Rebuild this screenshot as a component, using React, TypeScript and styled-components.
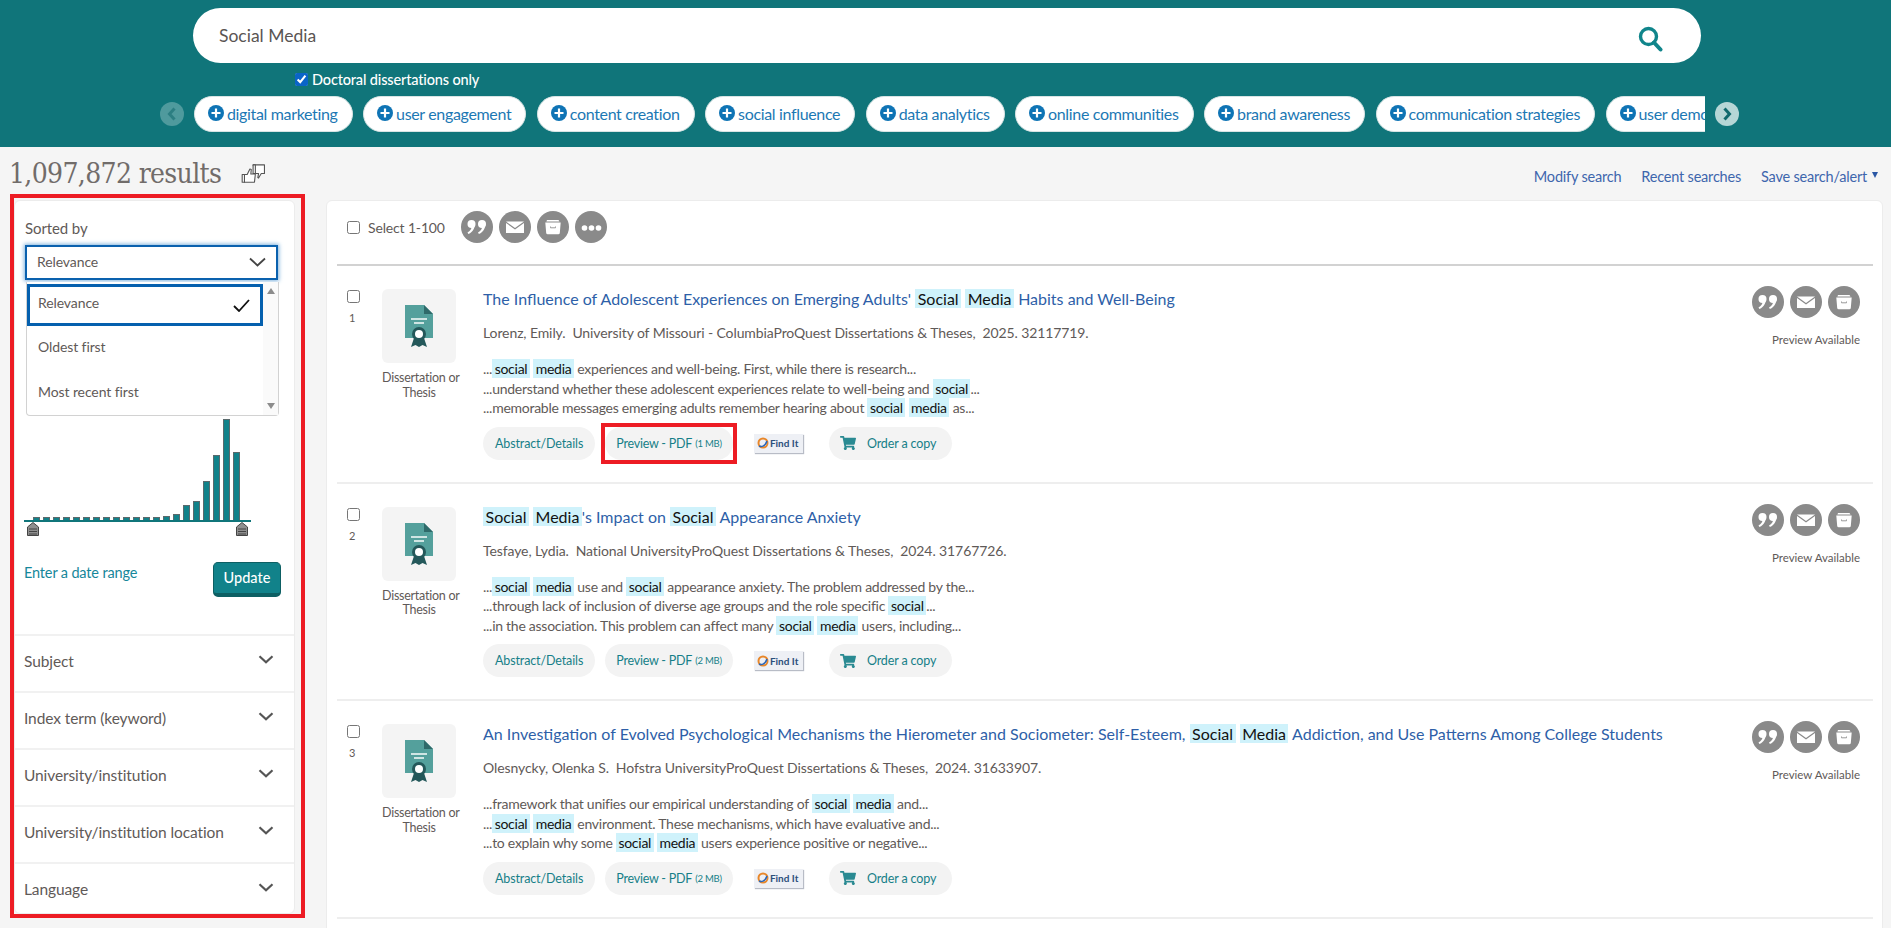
import React from "react";
import styled, { createGlobalStyle } from "styled-components";
import { FaShoppingCart } from "react-icons/fa";

const sans = `Lato, "Noto Sans", "Liberation Sans", sans-serif`;

const GlobalStyle = createGlobalStyle`
  html, body { margin: 0; padding: 0; height: 100%; overflow: hidden; }
  body { background: #f5f5f5; color: #5f5a58; font-family: ${sans}; }
  *, *::before, *::after { box-sizing: border-box; }
`;

const Page = styled.div`
  width: 1891px;
  height: 928px;
  overflow: hidden;
`;

// Teal band on top
const Header = styled.header`
  height: 147px;
  background: #10757a;
  padding: 8px 151px 0 160px;
`;

const SearchBox = styled.div`
  height: 55px;
  margin: 0 39px 0 33px;
  padding: 0 38px 0 26px;
  background: #fff;
  border-radius: 28px;
  display: flex;
  align-items: center;
  justify-content: space-between;
  font-size: 17.5px;
  color: #5a5553;
`;

const SearchIcon = styled.svg`
  width: 25px;
  height: 26px;
  margin-top: 7px;
`;

const CheckRow = styled.label`
  display: flex;
  align-items: center;
  gap: 4px;
  height: 16px;
  margin: 8px 0 0 135px;
  color: #fff;
  font-size: 14.5px;
  font-weight: 500;
  letter-spacing: -0.15px;
`;

const BlueCheck = styled.input`
  width: 13px;
  height: 13px;
  margin: 0;
  accent-color: #0a64c8;
`;

const Carousel = styled.div`
  display: flex;
  align-items: center;
  gap: 10px;
  margin-top: 9px;
`;

const Arrow = styled.div<{ $off?: boolean }>`
  width: 24px;
  height: 24px;
  flex: none;
  border-radius: 50%;
  display: flex;
  align-items: center;
  justify-content: center;
  background: ${(p) => (p.$off ? "#4f9a9d" : "#b6d6d6")};
`;

const PillTrack = styled.div`
  width: 1511px;
  display: flex;
  gap: 10.5px;
  overflow: hidden;
`;

const Pill = styled.div`
  flex: none;
  height: 36px;
  padding: 0 14px 2px 13px;
  background: #fff;
  border: 1px solid #d8e4e4;
  border-radius: 18px;
  display: flex;
  align-items: center;
  gap: 3px;
  color: #1c78b4;
  font-size: 16px;
  white-space: nowrap;
  letter-spacing: -0.34px;
`;

const PlusIcon = styled.svg`
  width: 16px;
  height: 16px;
  flex: none;
`;

const SubHeader = styled.div`
  height: 53px;
  padding: 0 13px 0 9px;
  display: flex;
  align-items: center;
  justify-content: space-between;
`;

const ResultsCount = styled.div`
  display: flex;
  align-items: center;
  gap: 20px;
  font-family: "DejaVu Serif", serif;
  font-stretch: condensed;
  font-size: 28px;
  color: #716c6a;
  letter-spacing: -0.65px;
`;

const HandsIcon = styled.svg`
  width: 26px;
  height: 20px;
`;

const TopLinks = styled.nav`
  display: flex;
  gap: 20px;
  align-items: center;
  margin-top: 5px;
`;

const TopLink = styled.a`
  color: #3e66ad;
  font-size: 14.5px;
  letter-spacing: -0.2px;
  display: flex;
  align-items: center;
  gap: 5px;
`;

const Caret = styled.span`
  width: 0;
  height: 0;
  margin-top: -3px;
  border-left: 3.5px solid transparent;
  border-right: 3.5px solid transparent;
  border-top: 6px solid #2a57a5;
`;

const Columns = styled.div`
  display: flex;
  gap: 31px;
  padding-left: 14px;
`;

const SideWrap = styled.aside`
  position: relative;
  width: 281px;
  height: 714px;
  flex: none;
  background: #fff;
  border: 1px solid #ececec;
  border-radius: 6px;
  /* annotation drawn over the panel */
  &::after {
    content: "";
    position: absolute;
    left: -5px;
    top: -7px;
    width: 295px;
    height: 724px;
    border: 4px solid #ed1c24;
    pointer-events: none;
  }
`;

const SortBlock = styled.div`
  position: relative;
  height: 218px;
  padding: 17px 0 0 10px;
`;

const SortLabel = styled.div`
  font-size: 15px;
  letter-spacing: -0.1px;
  height: 20px;
  line-height: 20px;
`;

const SortSelect = styled.div`
  width: 253px;
  height: 35px;
  margin-top: 7px;
  padding: 0 10px 2px 10px;
  display: flex;
  align-items: center;
  justify-content: space-between;
  border: 2px solid #0a61ae;
  box-shadow: 0 0 4px 1px #7fb2dd;
  font-size: 14px;
  letter-spacing: -0.1px;
`;

const SortMenu = styled.div`
  position: absolute;
  left: 11px;
  top: 81px;
  width: 253px;
  height: 134px;
  background: #fff;
  border: 1px solid #d2d2d2;
  border-top: none;
  border-radius: 0 0 4px 4px;
  display: flex;
  z-index: 2;
`;

const MenuList = styled.div`
  flex: 1;
  padding-top: 2px;
`;

const MenuItem = styled.div<{ $on?: boolean }>`
  height: 42px;
  margin-bottom: ${(p) => (p.$on ? "2px" : "3px")};
  padding: 0 10px 5px ${(p) => (p.$on ? "8px" : "11px")};
  display: flex;
  align-items: center;
  justify-content: space-between;
  font-size: 14px;
  letter-spacing: -0.1px;
  border: ${(p) => (p.$on ? "3px solid #0560ae" : "none")};
`;

const MenuCheck = styled.svg`
  margin-top: 6px;
`;

const MenuScroll = styled.div`
  width: 15px;
  background: #fafafa;
  display: flex;
  flex-direction: column;
  justify-content: space-between;
  align-items: center;
  padding: 6px 0;
`;

const ScrollTri = styled.span<{ $down?: boolean }>`
  width: 0;
  height: 0;
  border-left: 4.5px solid transparent;
  border-right: 4.5px solid transparent;
  ${(p) => (p.$down ? "border-top" : "border-bottom")}: 6px solid #8c8c8c;
`;

const Histogram = styled.div`
  width: 227px;
  height: 103px;
  margin: 0 0 0 9px;
  padding-left: 9px;
  display: flex;
  align-items: flex-end;
  gap: 3px;
  border-bottom: 2px solid #10757a;
`;

const Bar = styled.div`
  width: 7px;
  flex: none;
  background: #11828a;
  border: 1px solid #5b6a6c;
  border-bottom: none;
`;

const Handles = styled.div`
  width: 221px;
  margin: 0 0 0 12px;
  display: flex;
  justify-content: space-between;
  height: 14px;
`;

const HandleIcon = styled.svg`
  width: 12px;
  height: 14px;
`;

const DateRow = styled.div`
  display: flex;
  justify-content: space-between;
  align-items: flex-start;
  margin-top: 26px;
  padding: 0 13px 0 9px;
  height: 72px;
`;

const DateLink = styled.a`
  margin-top: 2px;
  color: #16879a;
  font-size: 14.5px;
  letter-spacing: -0.15px;
`;

const UpdateButton = styled.button`
  width: 68px;
  height: 35px;
  padding: 0 0 2px;
  background: #11828a;
  color: #fff;
  border: 1px solid #0d5f63;
  border-bottom-width: 4px;
  border-radius: 5px;
  font-family: ${sans};
  font-size: 14.5px;
  font-weight: 500;
`;

const FacetRow = styled.div`
  height: 57px;
  padding: 0 20px 6px 9px;
  border-top: 2px solid #f1f1f1;
  display: flex;
  align-items: center;
  justify-content: space-between;
  font-size: 15.5px;
  letter-spacing: -0.1px;
`;

const Chevron = styled.svg`
  width: 16px;
  height: 9px;
  margin-top: -3px;
`;

const MainCard = styled.main`
  width: 1557px;
  height: 800px;
  flex: none;
  background: #fff;
  border: 1px solid #ececec;
  border-radius: 6px;
  padding: 0 9px 0 10px;
`;

const Toolbar = styled.div`
  height: 65px;
  padding: 10px 0 0 10px;
  display: flex;
  align-items: flex-start;
  border-bottom: 2px solid #d2d2d2;
`;

const SelectLabel = styled.label`
  display: flex;
  align-items: center;
  height: 32px;
  gap: 8px;
  font-size: 14px;
  letter-spacing: -0.15px;
  margin-right: 16px;
`;

const Box = styled.input`
  display: block;
  width: 13px;
  height: 13px;
  margin: 0;
  accent-color: #0a64c8;
`;

const IconGroup = styled.div`
  display: flex;
  gap: 6px;
`;

const RoundIcon = styled.svg`
  width: 32px;
  height: 32px;
  display: block;
`;

const Result = styled.article`
  height: 217.5px;
  padding: 23px 13px 0 10px;
  border-bottom: 2px solid #eeeeee;
  display: flex;
`;

const CheckCol = styled.div`
  width: 35px;
  padding-top: 1px;
  flex: none;
`;

const RowNumber = styled.div`
  font-size: 11px;
  margin-top: 8px;
  padding-left: 2px;
`;

const TypeCol = styled.div`
  width: 74px;
  margin-right: 27px;
  flex: none;
  text-align: center;
  font-size: 12.5px;
  line-height: 14.5px;
  letter-spacing: -0.25px;
  white-space: nowrap;
`;

const Thumb = styled.div`
  width: 74px;
  height: 74px;
  margin-bottom: 8px;
  background: #f4f4f4;
  border-radius: 6px;
  display: flex;
  align-items: center;
  justify-content: center;
`;

const Body = styled.div`
  flex: 1;
  min-width: 0;
`;

const Title = styled.a`
  display: block;
  height: 22px;
  line-height: 20px;
  color: #2e5fa8;
  font-size: 16px;
`;

const Mark = styled.span`
  display: inline-block;
  line-height: 19px;
  padding: 0 2.5px;
  background: #cff2fb;
  color: #111;
`;

const Citation = styled.div`
  margin-top: 12px;
  height: 20px;
  line-height: 20px;
  font-size: 14px;
  letter-spacing: -0.1px;
  white-space: pre;
`;

const Snippets = styled.div`
  margin-top: 16px;
  font-size: 14px;
  line-height: 19.5px;
  letter-spacing: -0.26px;
`;

const Actions = styled.div`
  margin-top: 9px;
  display: flex;
  align-items: center;
  gap: 10px;
`;

const ActionPill = styled.a`
  position: relative;
  height: 33px;
  padding: 0 12px;
  background: #f3f3f3;
  border-radius: 17px;
  display: flex;
  align-items: center;
  gap: 3px;
  color: #167f88;
  font-size: 12.5px;
  letter-spacing: -0.12px;
`;

const PreviewPill = styled(ActionPill)<{ $flag?: boolean }>`
  padding: 0 11px;
  letter-spacing: -0.22px;
  /* annotation box over the first preview link */
  ${(p) =>
    p.$flag
      ? `&::after {
    content: "";
    position: absolute;
    inset: -4px;
    border: 4px solid #ed1c24;
  }`
      : ""}
`;

const Size = styled.span`
  font-size: 9.5px;
`;

const FindIt = styled.div`
  width: 49px;
  height: 19px;
  margin: 0 16px 0 11px;
  background: #eef0f5;
  box-shadow: 1px 1px 1px #b8bcc6;
  display: flex;
  align-items: center;
  gap: 1px;
  padding-left: 3px;
  color: #2c4f7c;
  font-size: 10px;
  font-weight: 700;
  white-space: nowrap;
`;

const FindLogo = styled.svg`
  width: 12px;
  height: 12px;
  flex: none;
`;

const CartPill = styled(ActionPill)`
  gap: 11px;
  padding: 0 16px 0 11px;
`;

const SideCol = styled.div`
  width: 108px;
  flex: none;
  margin: -3px 0 0 auto;
  text-align: right;
  font-size: 11.5px;
`;

const SideIcons = styled(IconGroup)`
  margin-bottom: 15px;
`;

const QuoteGlyph = () => (
  <RoundIcon viewBox="0 0 32 32">
    <circle cx="16" cy="16" r="16" fill="#8a8a8a" />
    <g fill="#fff">
      <circle cx="10.5" cy="13" r="4" />
      <path d="M13.6 11.5c.9 4.7-1.4 9.4-6.2 11.6l-.9-1.6c2.7-1.6 4.2-3.8 4.3-6.5z" />
      <circle cx="21" cy="13" r="4" />
      <path d="M24.1 11.5c.9 4.7-1.4 9.4-6.2 11.6l-.9-1.6c2.7-1.6 4.2-3.8 4.3-6.5z" />
    </g>
  </RoundIcon>
);

const MailGlyph = () => (
  <RoundIcon viewBox="0 0 32 32">
    <circle cx="16" cy="16" r="16" fill="#8a8a8a" />
    <path d="M7 10.5h18L16 17z" fill="#fff" />
    <path d="M7 12l9 6.4 9-6.4v10H7z" fill="#fff" />
  </RoundIcon>
);

const BoxGlyph = () => (
  <RoundIcon viewBox="0 0 32 32">
    <circle cx="16" cy="16" r="16" fill="#8a8a8a" />
    <path d="M10 9h11.5l1 1.6H9.4z" fill="#fff" />
    <path d="M8.3 11.5h15.4l-.9 10.5a1.5 1.5 0 0 1-1.5 1.3H10.7a1.5 1.5 0 0 1-1.5-1.3z" fill="#fff" />
    <path d="M13.5 15.5v1.3h5v-1.3" fill="none" stroke="#9a9a9a" strokeWidth="1" />
  </RoundIcon>
);

const DotsGlyph = () => (
  <RoundIcon viewBox="0 0 32 32">
    <circle cx="16" cy="16" r="16" fill="#8a8a8a" />
    <g fill="#fff">
      <circle cx="9.5" cy="17" r="2.8" />
      <circle cx="16.5" cy="17" r="2.8" />
      <circle cx="23.5" cy="17" r="2.8" />
    </g>
  </RoundIcon>
);

const DocIcon = () => (
  <svg width="30" height="44" viewBox="0 0 30 44">
    <path d="M1 1h19l9 9v24H1z" fill="#54a09c" />
    <path d="M20 1l9 9h-9z" fill="#2f6a6a" />
    <rect x="7" y="14" width="16" height="2" fill="#cfe5e3" />
    <rect x="10" y="18" width="10" height="2" fill="#cfe5e3" />
    <path d="M10 34l-3 9 4.500-2 3.500 2 3.500-2 4.500 2-3-9z" fill="#24585a" />
    <circle cx="15" cy="30" r="7" fill="#24585a" />
    <circle cx="15" cy="30" r="4" fill="#fff" />
  </svg>
);

const Plus = () => (
  <PlusIcon viewBox="0 0 16 16">
    <circle cx="8" cy="8" r="8" fill="#0f74b5" />
    <path d="M8 3.500v9M3.500 8h9" stroke="#fff" strokeWidth="2.2" />
  </PlusIcon>
);

const ArrowGlyph = ({ right }: { right?: boolean }) => (
  <svg width="10" height="14" viewBox="0 0 10 14">
    <path
      d={right ? "M2.500 1.500L7.500 7l-5 5.500" : "M7.500 1.500L2.500 7l5 5.500"}
      fill="none"
      stroke={right ? "#10696d" : "#2c7e82"}
      strokeWidth="3"
    />
  </svg>
);

const Handle = () => (
  <HandleIcon viewBox="0 0 12 14">
    <path d="M6 .5l5.500 4.500v8.500h-11V5z" fill="#8f8f8f" stroke="#444" strokeWidth="1" />
    <path d="M2 7h8M2 9.500h8M2 12h8" stroke="#444" strokeWidth="1" />
  </HandleIcon>
);

const FacetChevron = () => (
  <Chevron viewBox="0 0 16 9">
    <path d="M1.500 1.200L8 7.200l6.500-6" fill="none" stroke="#555" strokeWidth="2.200" />
  </Chevron>
);

const pills = [
  "digital marketing",
  "user engagement",
  "content creation",
  "social influence",
  "data analytics",
  "online communities",
  "brand awareness",
  "communication strategies",
  "user demographics",
];

const bars = [3, 3, 3, 3, 3, 3, 3, 3, 3, 3, 3, 3, 3, 4, 6, 15, 19, 39, 65, 101, 68];

const facets = [
  "Subject",
  "Index term (keyword)",
  "University/institution",
  "University/institution location",
  "Language",
];

const S = () => <Mark>social</Mark>;
const M = () => <Mark>media</Mark>;

const results = [
  {
    n: 1,
    title: (
      <>
        The Influence of Adolescent Experiences on Emerging Adults' <Mark>Social</Mark> <Mark>Media</Mark> Habits and Well-Being
      </>
    ),
    cite: "Lorenz, Emily.  University of Missouri - ColumbiaProQuest Dissertations & Theses,  2025. 32117719.",
    lines: [
      <>...<S /> <M /> experiences and well-being. First, while there is research...</>,
      <>...understand whether these adolescent experiences relate to well-being and <S />...</>,
      <>...memorable messages emerging adults remember hearing about <S /> <M /> as...</>,
    ],
    size: "1 MB",
  },
  {
    n: 2,
    title: (
      <>
        <Mark>Social</Mark> <Mark>Media</Mark>'s Impact on <Mark>Social</Mark> Appearance Anxiety
      </>
    ),
    cite: "Tesfaye, Lydia.  National UniversityProQuest Dissertations & Theses,  2024. 31767726.",
    lines: [
      <>...<S /> <M /> use and <S /> appearance anxiety. The problem addressed by the...</>,
      <>...through lack of inclusion of diverse age groups and the role specific <S />...</>,
      <>...in the association. This problem can affect many <S /> <M /> users, including...</>,
    ],
    size: "2 MB",
  },
  {
    n: 3,
    title: (
      <>
        An Investigation of Evolved Psychological Mechanisms the Hierometer and Sociometer: Self-Esteem, <Mark>Social</Mark> <Mark>Media</Mark> Addiction, and Use Patterns Among College Students
      </>
    ),
    cite: "Olesnycky, Olenka S.  Hofstra UniversityProQuest Dissertations & Theses,  2024. 31633907.",
    lines: [
      <>...framework that unifies our empirical understanding of <S /> <M /> and...</>,
      <>...<S /> <M /> environment. These mechanisms, which have evaluative and...</>,
      <>...to explain why some <S /> <M /> users experience positive or negative...</>,
    ],
    size: "2 MB",
  },
];

export default function App() {
  return (
    <Page>
      <GlobalStyle />
      <Header>
        <SearchBox>
          Social Media
          <SearchIcon viewBox="0 0 25 26">
            <circle cx="10.500" cy="10.500" r="8" fill="none" stroke="#10858b" strokeWidth="3.400" />
            <path d="M16 16.500l6.500 7" stroke="#10858b" strokeWidth="4" strokeLinecap="round" />
          </SearchIcon>
        </SearchBox>
        <CheckRow>
          <BlueCheck type="checkbox" defaultChecked />
          Doctoral dissertations only
        </CheckRow>
        <Carousel>
          <Arrow $off>
            <ArrowGlyph />
          </Arrow>
          <PillTrack>
            {pills.map((p) => (
              <Pill key={p}>
                <Plus />
                {p}
              </Pill>
            ))}
          </PillTrack>
          <Arrow>
            <ArrowGlyph right />
          </Arrow>
        </Carousel>
      </Header>

      <SubHeader>
        <ResultsCount>
          1,097,872 results
          <HandsIcon viewBox="0 0 28 22" fill="#fff" stroke="#555" strokeWidth="1.200" strokeLinejoin="round">
            <path d="M13 1h12.500v9.500h-3.500l-3 5-.8-.5.8-4.500H15.500z" />
            <rect x="13" y="1" width="2.500" height="9.500" />
            <path d="M3.500 11.500h3l3-6 1.500.5-.5 5h5l-1 9h-11z" />
            <rect x="1" y="11.500" width="2.500" height="8.500" />
          </HandsIcon>
        </ResultsCount>
        <TopLinks>
          <TopLink>Modify search</TopLink>
          <TopLink>Recent searches</TopLink>
          <TopLink>
            Save search/alert
            <Caret />
          </TopLink>
        </TopLinks>
      </SubHeader>

      <Columns>
        <SideWrap>
          <SortBlock>
            <SortLabel>Sorted by</SortLabel>
            <SortSelect>
              Relevance
              <svg width="17" height="10" viewBox="0 0 17 10">
                <path d="M1 1.500l7.500 7 7.500-7" fill="none" stroke="#444" strokeWidth="1.800" />
              </svg>
            </SortSelect>
            <SortMenu>
              <MenuList>
                <MenuItem $on>
                  Relevance
                  <MenuCheck width="17" height="13" viewBox="0 0 17 13">
                    <path d="M1 7l5 5L16 1" fill="none" stroke="#111" strokeWidth="1.800" />
                  </MenuCheck>
                </MenuItem>
                <MenuItem>Oldest first</MenuItem>
                <MenuItem>Most recent first</MenuItem>
              </MenuList>
              <MenuScroll>
                <ScrollTri />
                <ScrollTri $down />
              </MenuScroll>
            </SortMenu>
          </SortBlock>
          <Histogram>
            {bars.map((h, i) => (
              <Bar key={i} style={{ height: h }} />
            ))}
          </Histogram>
          <Handles>
            <Handle />
            <Handle />
          </Handles>
          <DateRow>
            <DateLink>Enter a date range</DateLink>
            <UpdateButton>Update</UpdateButton>
          </DateRow>
          {facets.map((f) => (
            <FacetRow key={f}>
              {f}
              <FacetChevron />
            </FacetRow>
          ))}
        </SideWrap>

        <MainCard>
          <Toolbar>
            <SelectLabel>
              <Box type="checkbox" />
              Select 1-100
            </SelectLabel>
            <IconGroup>
              <QuoteGlyph />
              <MailGlyph />
              <BoxGlyph />
              <DotsGlyph />
            </IconGroup>
          </Toolbar>
          {results.map((r) => (
            <Result key={r.n}>
              <CheckCol>
                <Box type="checkbox" />
                <RowNumber>{r.n}</RowNumber>
              </CheckCol>
              <TypeCol>
                <Thumb>
                  <DocIcon />
                </Thumb>
                Dissertation or
                <br />
                Thesis
              </TypeCol>
              <Body>
                <Title>{r.title}</Title>
                <Citation>{r.cite}</Citation>
                <Snippets>
                  {r.lines.map((l, i) => (
                    <div key={i}>{l}</div>
                  ))}
                </Snippets>
                <Actions>
                  <ActionPill>Abstract/Details</ActionPill>
                  <PreviewPill $flag={r.n === 1}>
                    Preview - PDF <Size>({r.size})</Size>
                  </PreviewPill>
                  <FindIt>
                    <FindLogo viewBox="0 0 12 12">
                      <circle cx="6" cy="6" r="4.500" fill="none" stroke="#e8872a" strokeWidth="2" />
                      <path d="M2 9c2 1 6 1 8-5" fill="none" stroke="#2b66b8" strokeWidth="1.600" />
                    </FindLogo>
                    Find It
                  </FindIt>
                  <CartPill>
                    <FaShoppingCart size={16} color="#2a8a92" />
                    Order a copy
                  </CartPill>
                </Actions>
              </Body>
              <SideCol>
                <SideIcons>
                  <QuoteGlyph />
                  <MailGlyph />
                  <BoxGlyph />
                </SideIcons>
                Preview Available
              </SideCol>
            </Result>
          ))}
        </MainCard>
      </Columns>
    </Page>
  );
}
